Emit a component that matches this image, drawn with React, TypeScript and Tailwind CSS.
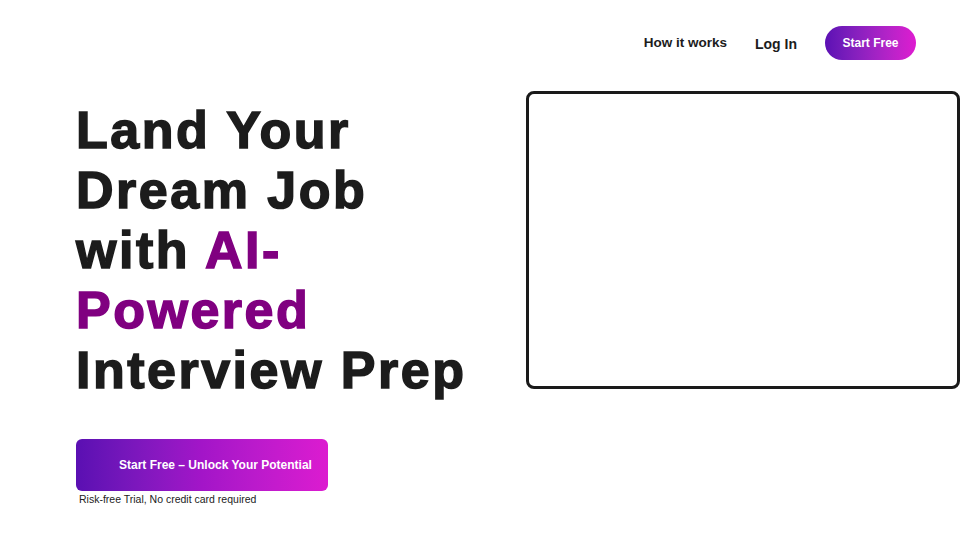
import React from "react";

export default function App() {
  return (
    <div className="min-h-[540px] w-[960px] bg-white font-['Liberation_Sans',Arial,sans-serif] text-[#1c1c1c]">
      {/* Top nav */}
      <header className="flex h-[86px] items-center justify-end gap-7 pr-[44px]">
        <a className="text-[13.5px] font-bold text-[#1c1c1c]">How it works</a>
        <a className="mt-[2px] text-[14px] font-bold text-[#1c1c1c]">Log In</a>
        <button className="h-[34px] w-[91px] rounded-full bg-linear-to-r from-[#5c10b4] to-[#de1bd0] text-[12px] font-bold text-white">
          Start Free
        </button>
      </header>

      <main className="flex">
        {/* Left: hero copy */}
        <div className="w-[526px] shrink-0 pl-[76px]">
          <h1 className="mt-[14px] whitespace-nowrap text-[52px] font-bold leading-[60px] tracking-[2.5px] [-webkit-text-stroke:1.5px_currentColor]">
            Land Your
            <br />
            Dream Job
            <br />
            with <span className="text-[#800080]">AI-</span>
            <br />
            <span className="text-[#800080]">Powered</span>
            <br />
            Interview Prep
          </h1>

          <button className="mt-[39px] flex h-[52px] w-[252px] items-center rounded-[6px] bg-linear-to-r from-[#5a0fb2] via-[#a315c8] to-[#dc1bd0] pl-[43px] text-[12px] font-bold text-white">
            Start Free – Unlock Your Potential
          </button>
          <p className="ml-[3px] mt-[1px] text-[10.5px] leading-[14px] text-[#222]">
            Risk-free Trial, No credit card required
          </p>
        </div>

        {/* Right: preview frame */}
        <div className="mt-[5px] h-[298px] w-[434px] rounded-[8px] border-[3px] border-[#1a1a1a]" />
      </main>
    </div>
  );
}
